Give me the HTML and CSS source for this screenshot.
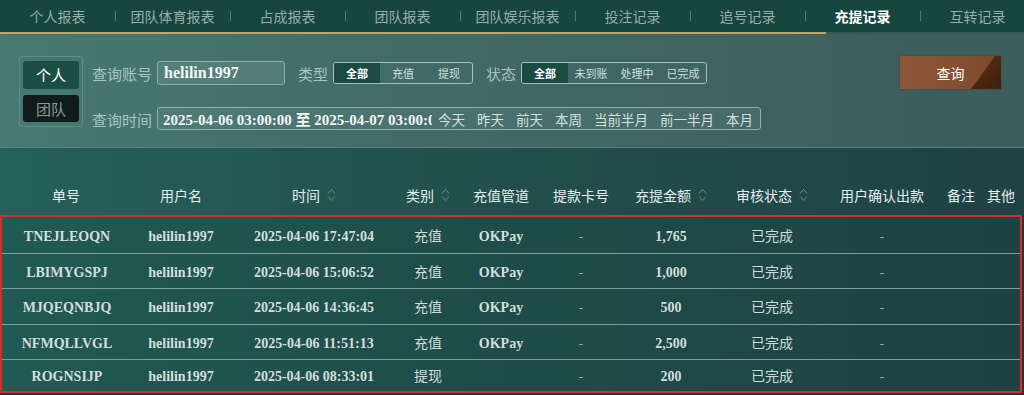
FILE: index.html
```html
<!DOCTYPE html>
<html lang="zh-CN">
<head>
<meta charset="utf-8">
<title>充提记录</title>
<link rel="stylesheet" href="styles.css">
</head>
<body>
<nav class="tabs">
  <a class="tab">个人报表</a>
  <a class="tab">团队体育报表</a>
  <a class="tab">占成报表</a>
  <a class="tab">团队报表</a>
  <a class="tab">团队娱乐报表</a>
  <a class="tab">投注记录</a>
  <a class="tab">追号记录</a>
  <a class="tab active">充提记录</a>
  <a class="tab">互转记录</a>
</nav>
<div class="tabline"><div class="tabline-fill"></div></div>

<section class="filters">
  <div class="scope">
    <button class="scope-btn active">个人</button>
    <button class="scope-btn">团队</button>
  </div>
  <div class="fields">
    <div class="field-row">
      <label class="lbl">查询账号</label>
      <div class="input account">helilin1997</div>
      <label class="lbl lbl-gap">类型</label>
      <div class="seg">
        <span class="seg-item active">全部</span>
        <span class="seg-item">充值</span>
        <span class="seg-item">提现</span>
      </div>
      <label class="lbl lbl-gap">状态</label>
      <div class="seg">
        <span class="seg-item active">全部</span>
        <span class="seg-item">未到账</span>
        <span class="seg-item">处理中</span>
        <span class="seg-item">已完成</span>
      </div>
    </div>
    <div class="field-row row2">
      <label class="lbl">查询时间</label>
      <div class="input range">
        <input class="range-text" type="text" readonly value="2025-04-06 03:00:00 至 2025-04-07 03:00:00">
        <div class="quick-list">
          <span class="quick">今天</span>
          <span class="quick">昨天</span>
          <span class="quick">前天</span>
          <span class="quick">本周</span>
          <span class="quick">当前半月</span>
          <span class="quick">前一半月</span>
          <span class="quick">本月</span>
        </div>
      </div>
    </div>
  </div>
  <button class="search">查询</button>
</section>

<div class="thead">
  <div class="th">单号</div>
  <div class="th">用户名</div>
  <div class="th">时间<svg class="sort" viewBox="0 0 9 16" width="9" height="16"><path d="M1 6.5 L4.5 2.5 L8 6.5 M1 9.5 L4.5 13.5 L8 9.5"/></svg></div>
  <div class="th">类别<svg class="sort" viewBox="0 0 9 16" width="9" height="16"><path d="M1 6.5 L4.5 2.5 L8 6.5 M1 9.5 L4.5 13.5 L8 9.5"/></svg></div>
  <div class="th">充值管道</div>
  <div class="th">提款卡号</div>
  <div class="th">充提金额<svg class="sort" viewBox="0 0 9 16" width="9" height="16"><path d="M1 6.5 L4.5 2.5 L8 6.5 M1 9.5 L4.5 13.5 L8 9.5"/></svg></div>
  <div class="th">审核状态<svg class="sort" viewBox="0 0 9 16" width="9" height="16"><path d="M1 6.5 L4.5 2.5 L8 6.5 M1 9.5 L4.5 13.5 L8 9.5"/></svg></div>
  <div class="th">用户确认出款</div>
  <div class="th">备注</div>
  <div class="th">其他</div>
</div>

<div class="tbody">
  <div class="tr">
    <div class="td en">TNEJLEOQN</div><div class="td en">helilin1997</div><div class="td en">2025-04-06 17:47:04</div>
    <div class="td cn">充值</div><div class="td en">OKPay</div><div class="td dash">-</div><div class="td en">1,765</div>
    <div class="td cn">已完成</div><div class="td dash">-</div><div class="td"></div><div class="td"></div>
  </div>
  <div class="tr">
    <div class="td en">LBIMYGSPJ</div><div class="td en">helilin1997</div><div class="td en">2025-04-06 15:06:52</div>
    <div class="td cn">充值</div><div class="td en">OKPay</div><div class="td dash">-</div><div class="td en">1,000</div>
    <div class="td cn">已完成</div><div class="td dash">-</div><div class="td"></div><div class="td"></div>
  </div>
  <div class="tr">
    <div class="td en">MJQEQNBJQ</div><div class="td en">helilin1997</div><div class="td en">2025-04-06 14:36:45</div>
    <div class="td cn">充值</div><div class="td en">OKPay</div><div class="td dash">-</div><div class="td en">500</div>
    <div class="td cn">已完成</div><div class="td dash">-</div><div class="td"></div><div class="td"></div>
  </div>
  <div class="tr">
    <div class="td en">NFMQLLVGL</div><div class="td en">helilin1997</div><div class="td en">2025-04-06 11:51:13</div>
    <div class="td cn">充值</div><div class="td en">OKPay</div><div class="td dash">-</div><div class="td en">2,500</div>
    <div class="td cn">已完成</div><div class="td dash">-</div><div class="td"></div><div class="td"></div>
  </div>
  <div class="tr">
    <div class="td en">ROGNSIJP</div><div class="td en">helilin1997</div><div class="td en">2025-04-06 08:33:01</div>
    <div class="td cn">提现</div><div class="td en"></div><div class="td dash">-</div><div class="td en">200</div>
    <div class="td cn">已完成</div><div class="td dash">-</div><div class="td"></div><div class="td"></div>
  </div>
</div>
</body>
</html>
```

FILE: styles.css
```css
* { box-sizing: border-box; }

body {
  margin: 0;
  width: 1024px;
  height: 395px;
  overflow: hidden;
  background: #1b3a3a;
  font-family: "Noto Sans CJK SC", "Noto Sans", sans-serif;
  color: #d5e2df;
}

/* ---------- tabs ---------- */
.tabs {
  display: flex;
  height: 32px;
  background: #16463e;
  overflow: hidden;
}
.tab {
  flex: none;
  width: 115px;
  text-align: center;
  line-height: 32px;
  font-size: 14px;
  color: #97afaa;
}
.tab + .tab {
  background: linear-gradient(#56796f, #56796f) left center / 1px 10px no-repeat;
}
.tab.active {
  color: #ffffff;
  font-weight: 700;
}
.tabline {
  height: 2px;
  background: #3b5a57;
}
.tabline-fill {
  width: 826px;
  height: 2px;
  background: #bea569;
}

/* ---------- filters ---------- */
.filters {
  display: flex;
  align-items: flex-start;
  height: 114px;
  padding: 22px 23px 0 19px;
  background: linear-gradient(90deg, #487973 0%, #426b67 40%, #3d5c5b 100%);
  border-bottom: 1px solid #5b817d;
}
.scope {
  width: 64px;
  height: 71px;
  border: 1px solid #5f8c86;
  border-radius: 3px;
  padding: 4px 3px;
  display: flex;
  flex-direction: column;
  gap: 6px;
}
.scope-btn {
  flex: 1;
  padding: 0;
  border: 0;
  border-radius: 3px;
  font-family: "Noto Sans CJK SC", sans-serif;
  font-size: 15px;
  background: #121b1c;
  color: #8a9b98;
}
.scope-btn.active {
  background: #1b4e44;
  color: #ffffff;
}

.fields {
  margin-left: 9px;
  margin-top: 5px;
  display: flex;
  flex-direction: column;
  gap: 22px;
}
.field-row {
  display: flex;
  align-items: center;
  height: 24px;
}
.field-row.row2 { height: 23px; }

.lbl {
  font-size: 15px;
  color: #a8c5c0;
  margin-right: 5px;
  white-space: nowrap;
}
.row2 .lbl { margin-top: 2px; }
.lbl-gap { margin-left: 13px; }

.input {
  height: 100%;
  border: 1px solid #8db1ac;
  border-radius: 3px;
  background: rgba(255, 255, 255, 0.09);
  color: #f3f6f5;
  font-family: "Liberation Serif", "Noto Sans CJK SC", serif;
  font-weight: 700;
}
.account {
  width: 128px;
  padding-left: 6px;
  font-size: 16px;
  line-height: 22px;
}

.seg {
  display: flex;
  height: 22px;
  border: 1px solid #a6c1bc;
  border-radius: 3px;
  overflow: hidden;
}
.seg-item {
  width: 46px;
  text-align: center;
  font-size: 11px;
  line-height: 20px;
  color: #cfe0dc;
}
.seg-item.active {
  background: #1b4a41;
  color: #ffffff;
  font-weight: 700;
}

.range {
  width: 604px;
  display: flex;
  align-items: center;
  padding-left: 5px;
  background: rgba(255, 255, 255, 0.05);
}
.range-text {
  width: 269px;
  flex: none;
  height: 21px;
  padding: 0;
  border: 0;
  outline: none;
  background: transparent;
  color: #f3f6f5;
  font-family: "Liberation Serif", "Noto Sans CJK SC", serif;
  font-weight: 700;
  font-size: 15px;
}
.quick-list {
  display: flex;
  gap: 12px;
  margin-left: 6px;
}
.quick {
  font-family: "Noto Sans CJK SC", sans-serif;
  font-weight: 400;
  font-size: 13.5px;
  color: #d2e2de;
  white-space: nowrap;
}

.search {
  margin-left: auto;
  width: 101px;
  height: 33px;
  padding: 0;
  border: 0;
  position: relative;
  overflow: hidden;
  background: linear-gradient(90deg, #8d5737 0%, #7e482b 100%);
  color: #ffffff;
  font-family: "Noto Sans CJK SC", sans-serif;
  font-size: 14px;
  box-shadow: 0 0 2px rgba(0, 0, 0, 0.25);
}
.search::after {
  content: "";
  position: absolute;
  right: 0;
  top: 0;
  width: 30px;
  height: 33px;
  background: linear-gradient(135deg, #5a2f17, #3f200c);
  clip-path: polygon(80% 0, 100% 0, 100% 100%, 0 100%);
}

/* ---------- table ---------- */
.thead {
  display: grid;
  grid-template-columns: 132px 98px 168px 60px 86px 74px 106px 96px 124px 34px 46px;
  height: 67px;
  padding-top: 37px;
  background: linear-gradient(90deg, #25605a 0%, #22504d 45%, #1f4244 100%);
}
.th {
  display: flex;
  justify-content: center;
  align-items: center;
  height: 20px;
  font-size: 14px;
  color: #e4eeec;
  white-space: nowrap;
}
.sort {
  margin-left: 7px;
  fill: none;
  stroke: #6f8f8a;
  stroke-width: 1;
}

.tbody {
  width: 1022px;
  border: 2px solid #d4302a;
  background: linear-gradient(90deg, #215a53 0%, #1f4d4a 45%, #1d4243 100%);
}
.tr {
  display: grid;
  grid-template-columns: 130px 98px 168px 60px 86px 74px 106px 96px 124px 34px 42px;
  align-items: center;
  height: 36px;
  padding-top: 3px;
}
.tr + .tr {
  border-top: 1px solid #7f9f9b;
}
.tr:nth-child(2n) { height: 35px; }
.tr:last-child { height: 32px; padding-top: 2px; }

.td {
  text-align: center;
  white-space: nowrap;
  line-height: 20px;
  height: 20px;
}
.en {
  font-family: "Liberation Serif", serif;
  font-weight: 700;
  font-size: 14px;
  color: #d3dfdc;
}
.cn {
  font-size: 14px;
  line-height: 16px;
  color: #cfdcd9;
}
.dash {
  font-family: "Liberation Serif", serif;
  font-size: 13px;
  color: #9fb4b0;
}
```
